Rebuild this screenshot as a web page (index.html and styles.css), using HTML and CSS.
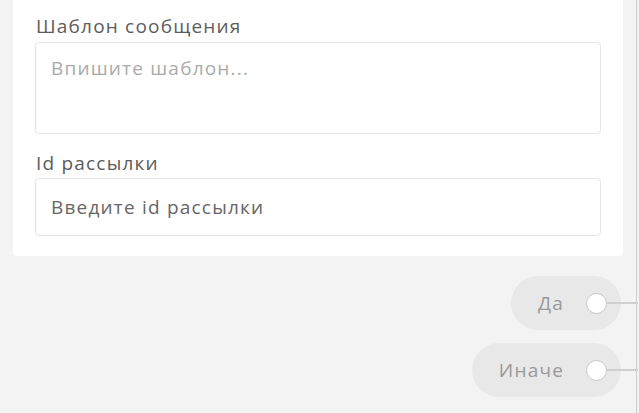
FILE: index.html
```html
<!DOCTYPE html>
<html lang="ru">
<head>
<meta charset="utf-8">
<link rel="stylesheet" href="styles.css">
</head>
<body>
<div class="canvas">
  <div class="card">
    <label class="label">Шаблон сообщения</label>
    <div class="textarea"><span class="placeholder">Впишите шаблон...</span></div>
    <label class="label label-second">Id рассылки</label>
    <div class="input"><span class="value">Введите id рассылки</span></div>
  </div>
  <div class="outputs">
    <div class="pill"><span class="pill-text">Да</span><span class="port"></span></div>
    <div class="pill"><span class="pill-text">Иначе</span><span class="port"></span></div>
  </div>
</div>
</body>
</html>
```
FILE: styles.css
```css
html, body {
  margin: 0;
  padding: 0;
  background: #f3f3f3;
  font-family: "Open Sans", "Noto Sans", sans-serif;
  height: 100%;
  overflow: hidden;
}
.canvas {
  width: 637px;
  height: 413px;
  border-right: 1px solid #cfcfcf;
  box-sizing: border-box;
  position: relative;
}
.card {
  margin-left: 13px;
  width: 610px;
  box-sizing: border-box;
  background: #fff;
  border-radius: 0 0 4px 4px;
  padding: 14px 22px 20px 22px;
  display: flex;
  flex-direction: column;
}
.label,
.placeholder,
.value,
.pill-text {
  font-size: 19px;
  line-height: 24px;
  letter-spacing: 1.2px;
}
.label {
  color: #5c5c5c;
  padding-left: 1px;
  margin-bottom: 4px;
}
.label-second {
  margin-top: 17px;
  margin-bottom: 3px;
}
.textarea {
  height: 92px;
  box-sizing: border-box;
  border: 1px solid #e4e4e4;
  border-radius: 4px;
  padding: 13px 15px;
}
.placeholder {
  color: #aaa;
}
.input {
  height: 58px;
  box-sizing: border-box;
  border: 1px solid #e4e4e4;
  border-radius: 4px;
  padding: 0 15px;
  display: flex;
  align-items: center;
}
.value {
  color: #666;
}
.outputs {
  display: flex;
  flex-direction: column;
  align-items: flex-end;
  gap: 13px;
  margin-top: 20px;
  padding-right: 15px;
}
.pill {
  height: 54px;
  border-radius: 27px;
  background: #e8e8e8;
  display: flex;
  align-items: center;
  padding: 0 14px 0 27px;
  gap: 22px;
  position: relative;
}
.pill-text {
  color: #999;
}
.port {
  width: 19px;
  height: 19px;
  border: 1px solid #c8c8c8;
  border-radius: 50%;
  background: #fff;
  position: relative;
}
.port::after {
  content: "";
  position: absolute;
  left: 20px;
  top: 8px;
  width: 31px;
  height: 2px;
  background: #cfcfcf;
}
```
